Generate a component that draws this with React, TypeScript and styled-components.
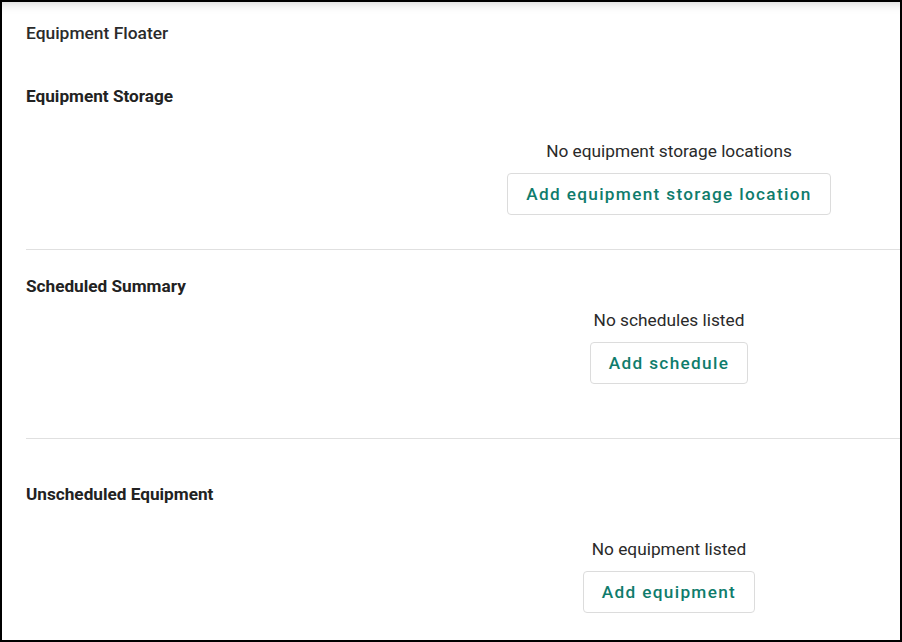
import styled, { createGlobalStyle } from "styled-components";

const GlobalStyle = createGlobalStyle`
  html, body {
    margin: 0;
    padding: 0;
    background: #ffffff;
  }
  body {
    font-family: Roboto, "Liberation Sans", Arial, sans-serif;
    color: #262626;
  }
`;

const Frame = styled.div`
  width: 902px;
  height: 642px;
  box-sizing: border-box;
  border: 2px solid #000;
  background: #fff;
  box-shadow: inset 0 12px 12px -12px rgba(0, 0, 0, 0.22);
  padding: 19px 0 0 24px;
  overflow: hidden;
`;

const Title = styled.div`
  font-size: 17.4px;
  line-height: 24px;
  font-weight: 500;
  color: #2b2b2b;
`;

const Section = styled.section<{ $top: number; $bottom: number; $divider?: boolean }>`
  padding-top: ${(p) => p.$top}px;
  padding-bottom: ${(p) => p.$bottom}px;
  border-bottom: ${(p) => (p.$divider ? "1px solid #e0e0e0" : "none")};
`;

const Heading = styled.h2`
  margin: 0;
  font-size: 17.2px;
  line-height: 24px;
  font-weight: 700;
  color: #222;
`;

const EmptyState = styled.div<{ $gap: number }>`
  margin-top: ${(p) => p.$gap}px;
  margin-left: 412px;
  display: flex;
  flex-direction: column;
  align-items: center;
  gap: 10px;
`;

const EmptyText = styled.div`
  font-size: 17.3px;
  line-height: 24px;
  color: #2a2a2a;
`;

const AddButton = styled.button`
  height: 42px;
  box-sizing: border-box;
  padding: 0 18px;
  background: #fff;
  border: 1px solid #dcdcdc;
  border-radius: 4px;
  font-family: Roboto, "Liberation Sans", Arial, sans-serif;
  font-size: 17.2px;
  font-weight: 500;
  letter-spacing: 1.33px;
  color: #0f7c6c;
  cursor: pointer;
`;

interface ISectionProps {
  title: string;
  empty: string;
  action: string;
  top: number;
  gap: number;
  bottom: number;
  divider?: boolean;
}

function ListSection({ title, empty, action, top, gap, bottom, divider }: ISectionProps) {
  return (
    <Section $top={top} $bottom={bottom} $divider={divider}>
      <Heading>{title}</Heading>
      <EmptyState $gap={gap}>
        <EmptyText>{empty}</EmptyText>
        <AddButton>{action}</AddButton>
      </EmptyState>
    </Section>
  );
}

export default function App() {
  return (
    <>
      <GlobalStyle />
      <Frame>
        <Title>Equipment Floater</Title>
        <ListSection
          title="Equipment Storage"
          empty="No equipment storage locations"
          action="Add equipment storage location"
          top={39}
          gap={31}
          bottom={34}
          divider
        />
        <ListSection
          title="Scheduled Summary"
          empty="No schedules listed"
          action="Add schedule"
          top={24}
          gap={10}
          bottom={54}
          divider
        />
        <ListSection
          title="Unscheduled Equipment"
          empty="No equipment listed"
          action="Add equipment"
          top={43}
          gap={31}
          bottom={0}
        />
      </Frame>
    </>
  );
}
